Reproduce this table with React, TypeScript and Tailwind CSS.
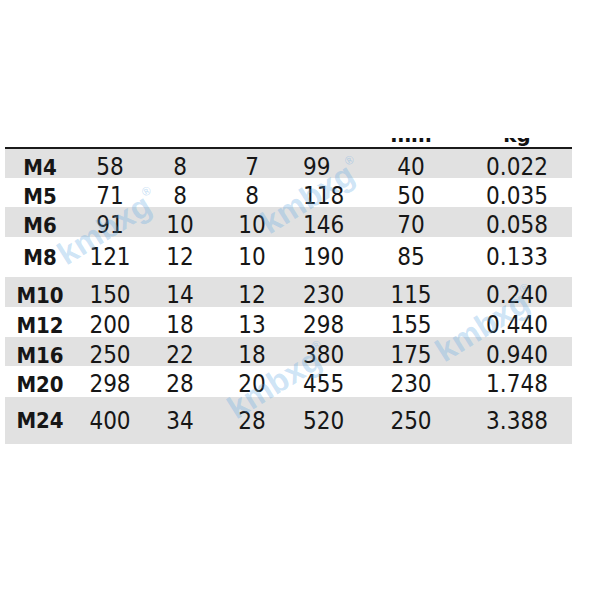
import React from "react";

const rows: { label: string; vals: string[]; h: string; gray: boolean }[] = [
  { label: "M4", vals: ["58", "8", "7", "99", "40", "0.022"], h: "h-[29px]", gray: true },
  { label: "M5", vals: ["71", "8", "8", "118", "50", "0.035"], h: "h-[29px]", gray: false },
  { label: "M6", vals: ["91", "10", "10", "146", "70", "0.058"], h: "h-[30px]", gray: true },
  { label: "M8", vals: ["121", "12", "10", "190", "85", "0.133"], h: "h-[40px]", gray: false },
  { label: "M10", vals: ["150", "14", "12", "230", "115", "0.240"], h: "h-[30px]", gray: true },
  { label: "M12", vals: ["200", "18", "13", "298", "155", "0.440"], h: "h-[30px]", gray: false },
  { label: "M16", vals: ["250", "22", "18", "380", "175", "0.940"], h: "h-[29px]", gray: true },
  { label: "M20", vals: ["298", "28", "20", "455", "230", "1.748"], h: "h-[31px]", gray: false },
  { label: "M24", vals: ["400", "34", "28", "520", "250", "3.388"], h: "h-[47px]", gray: true },
];

const font = { fontFamily: '"DejaVu Sans Condensed", "DejaVu Sans", sans-serif' };

function Watermark({ pos }: { pos: string }) {
  return (
    <div
      className={`absolute ${pos} -translate-x-1/2 -translate-y-1/2 rotate-[-32deg] text-[32px] font-bold leading-none whitespace-nowrap text-[rgba(90,165,225,0.3)] pointer-events-none`}
      style={{ fontFamily: '"Liberation Sans", Arial, sans-serif' }}
    >
      kmbxg<span className="text-[12px] align-top">®</span>
    </div>
  );
}

export default function App() {
  return (
    <div className="relative w-[600px] h-[600px] bg-white overflow-hidden" style={font}>
      <div className="h-[138px]" />
      <div className="ml-[5px] w-[567px]">
        <div className="grid grid-cols-[70px_70px_70px_74px_71px_102px_110px] h-[9px] overflow-hidden text-[22px] font-bold leading-[22px] text-[#111]">
          <div />
          <div />
          <div />
          <div />
          <div />
          <div className="text-center mt-[-14px]">mm</div>
          <div className="text-center mt-[-14px]">kg</div>
        </div>
        <div className="h-[2px] bg-[#1a1a1a]" />
        {rows.map((r) => (
          <div
            key={r.label}
            className={`grid grid-cols-[70px_70px_70px_74px_71px_102px_110px] items-center ${r.h} ${r.gray ? "bg-[#e1e1e1]" : "bg-white"} text-[#161616]`}
          >
            <div className="text-center text-[22px] font-bold">{r.label}</div>
            <div className="text-center text-[24px]">{r.vals[0]}</div>
            <div className="text-center text-[24px]">{r.vals[1]}</div>
            <div className="text-center text-[24px]">{r.vals[2]}</div>
            <div className="pl-[14px] text-[24px]">{r.vals[3]}</div>
            <div className="text-center text-[24px]">{r.vals[4]}</div>
            <div className="text-center text-[24px]">{r.vals[5]}</div>
          </div>
        ))}
      </div>
      <Watermark pos="left-[108px] top-[227px]" />
      <Watermark pos="left-[311px] top-[196px]" />
      <Watermark pos="left-[278px] top-[381px]" />
      <Watermark pos="left-[486px] top-[324px]" />
    </div>
  );
}
